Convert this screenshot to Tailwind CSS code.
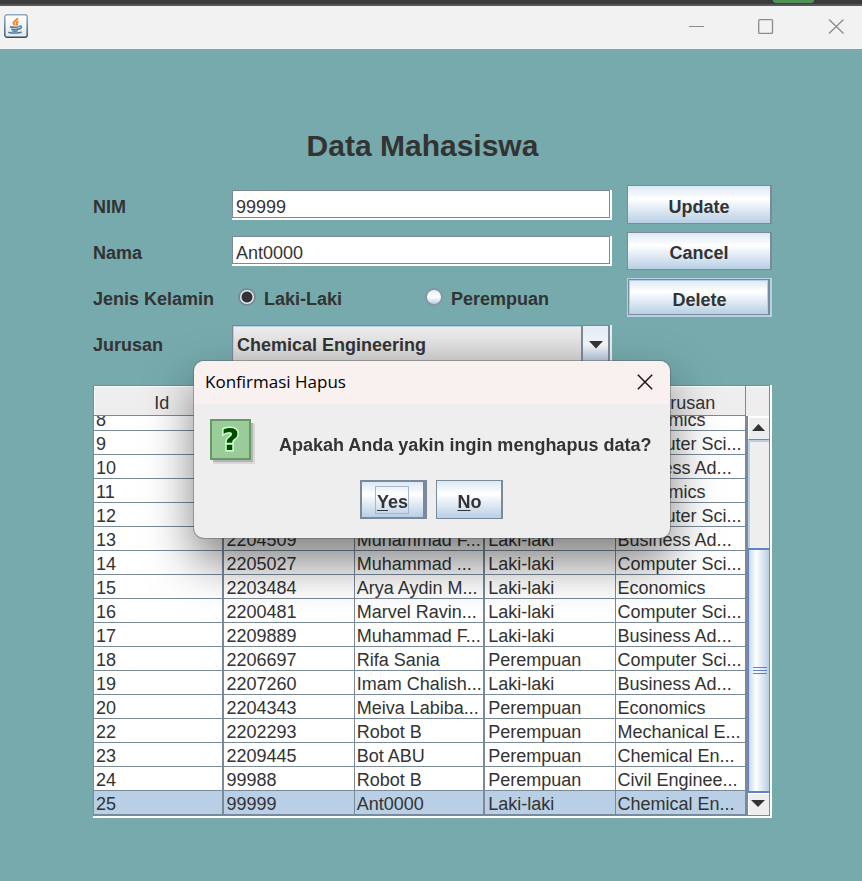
<!DOCTYPE html>
<html lang="id">
<head>
<meta charset="utf-8">
<meta name="viewport" content="width=device-width, initial-scale=1">
<title>Data Mahasiswa</title>
<script src="https://cdn.jsdelivr.net/npm/@tailwindcss/browser@4"></script>
</head>
<body class="relative flex min-h-screen flex-col bg-[#76aaad] font-['Liberation_Sans',Arial,sans-serif] text-[18px] leading-[22px] text-[#333333]">

<!-- Strip of the window behind -->
<div class="flex h-[6px] items-start justify-end border-b-2 border-[#5a575a] bg-[#3a3d3e] pr-[48px]">
  <div class="h-[3px] w-[41px] rounded-b-full bg-[#4f9455]"></div>
</div>

<!-- Window title bar -->
<header class="flex h-[43px] items-start justify-between bg-[#f2f2f2] pt-[8px] pr-[18px] pl-[4px]">
  <svg class="h-6 w-6" viewBox="0 0 24 24" fill="none" aria-hidden="true">
    <defs><linearGradient id="jf" x1="0" y1="0" x2="0" y2="1"><stop offset="0" stop-color="#8fa9bd"/><stop offset="1" stop-color="#2f5068"/></linearGradient>
    <linearGradient id="jb" x1="0" y1="0" x2="0" y2="1"><stop offset="0" stop-color="#fff"/><stop offset="1" stop-color="#e4e6e8"/></linearGradient></defs>
    <rect x=".8" y=".8" width="22.4" height="22.4" rx="2.2" fill="url(#jb)" stroke="url(#jf)" stroke-width="1.4"/>
    <path d="M13.400 4c.5 2.300-4.400 3.200-3.900 5.300.2.800 1.200 1.200 1.500 2.100M14.400 7.400c-1.600.7-2.300 1.500-1.500 2.500.5.600.2 1.200-.4 1.800" stroke="#f08020" stroke-width="1.900"/>
    <path d="M6 12.700c1.800.7 7.400.7 9.400-.1M7.200 14.800c1.500.8 5.600.8 7.600 0M8 16.600c1.500.7 4.200.7 5.800 0M15.400 12c2.700-.7 2.700 2.500-.5 3.200M4.400 18.200c1.500 1.200 11 1.200 13.200-.2" stroke="#4f7b9e" stroke-width="1.500"/>
  </svg>
  <div class="flex gap-[54px] pt-[4px]">
    <button aria-label="Minimize"><svg class="h-4 w-4" viewBox="0 0 16 16" fill="none" stroke="#8c8c8c" stroke-width="1"><path d="M1 8.500h15"/></svg></button>
    <button aria-label="Maximize"><svg class="h-4 w-4" viewBox="0 0 16 16" fill="none" stroke="#8c8c8c" stroke-width="1.300"><rect x=".7" y="1.600" width="13.800" height="13.800" rx="1"/></svg></button>
    <button aria-label="Close"><svg class="h-4 w-4" viewBox="0 0 16 16" fill="none" stroke="#8c8c8c" stroke-width="1.300"><path d="M1 1.500l14.500 14M15.500 1.500L1 15.500"/></svg></button>
  </div>
</header>

<main class="flex flex-col pr-[90px] pl-[93px] pt-[78px] pb-[63px]">
  <h1 class="pr-[20px] text-center text-[30px] leading-[38px] font-bold">Data Mahasiswa</h1>

  <form class="mt-[19px] flex gap-[15px]">
    <div class="grid flex-1 grid-cols-[139px_1fr] auto-rows-[46px] items-center font-bold">
      <label for="nim">NIM</label>
      <div class="mb-1 border-r-2 border-b-2 border-white"><input id="nim" value="99999" class="block h-[28px] w-full border border-[#7a8a99] bg-white pt-[6px] pl-[3px] font-normal outline-none"></div>
      <label for="nama">Nama</label>
      <div class="mb-1 border-r-2 border-b-2 border-white"><input id="nama" value="Ant0000" class="block h-[28px] w-full border border-[#7a8a99] bg-white pt-[6px] pl-[3px] font-normal outline-none"></div>
      <span id="jk">Jenis Kelamin</span>
      <div role="radiogroup" aria-labelledby="jk" class="grid grid-cols-2 pl-[6px]">
        <label class="flex items-start gap-[8px]"><input type="radio" name="jk" checked class="h-[18px] w-[18px] appearance-none rounded-full border-2 border-[#7a8a99] bg-[radial-gradient(circle,#333_0_5px,#e8f0f8_6px)]">Laki-Laki</label>
        <label class="flex items-start gap-[8px]"><input type="radio" name="jk" class="h-[18px] w-[18px] appearance-none rounded-full border-2 border-[#8496a8] bg-linear-to-b from-[#e3ecf5] via-white to-[#b8cfe5]">Perempuan</label>
      </div>
      <label for="jurusan">Jurusan</label>
      <div class="relative border-r-2 border-[#e8edf2]">
        <select id="jurusan" class="block h-[40px] w-full appearance-none border border-[#7a8a99] bg-linear-to-b from-[#eeeeee] to-[#d0d0d0] pl-[4px] font-bold inset-ring inset-ring-[#b8cfe5] outline-none"><option>Chemical Engineering</option></select>
        <span class="pointer-events-none absolute inset-y-0 right-0 flex w-[29px] items-center justify-center border-2 border-t border-[#7a8a99] bg-linear-to-b from-[#e3ecf5] via-[#f4f7fb] to-[#a9bfd5]">
          <svg class="h-[8px] w-[14px]" viewBox="0 0 14 8"><path d="M0 0h14L7 7.500z" fill="#333"/></svg>
        </span>
      </div>
    </div>
    <div class="flex w-[145px] flex-col gap-[8px] pt-px">
      <button type="button" class="h-[39px] border border-r-2 border-[#7a8a99] bg-linear-to-b from-[#dde8f3] via-white via-35% to-[#b8cfe5] pt-1 font-bold">Update</button>
      <button type="button" class="h-[38px] border border-r-2 border-[#7a8a99] bg-linear-to-b from-[#dde8f3] via-white via-35% to-[#b8cfe5] pt-1 font-bold">Cancel</button>
      <div class="flex h-[39px] border border-r-2 border-b-2 border-[#b8cfe5]"><button type="button" class="flex-1 border border-r-2 border-[#7a8a99] bg-linear-to-b from-[#dde8f3] via-white via-35% to-[#b8cfe5] pt-[6px] pl-[2px] font-bold inset-ring inset-ring-[#b8cfe5]">Delete</button></div>
    </div>
  </form>

  <section class="mt-[17px] border-r-2 border-b-2 border-white">
    <div class="flex h-[431px] border border-[#7a8a99]">
      <!-- Reversed column: the list opens scrolled to its last row -->
      <div class="flex flex-1 flex-col-reverse overflow-hidden">
        <table class="w-full shrink-0 table-fixed border-separate border-spacing-0 [&_td]:h-6 [&_td]:border-r [&_td]:border-b [&_td]:border-[#7a8a99] [&_td]:p-0 [&_td]:pt-[3px] [&_td]:pl-[2px] [&_td]:leading-[20px] [&_td]:whitespace-nowrap [&_td:nth-child(1)]:border-r-2 [&_td:nth-child(3)]:border-r-2 [&_td:nth-child(4)]:pl-[3px]">
          <thead><tr class="[&_th]:sticky [&_th]:top-0 [&_th]:h-[30px] [&_th]:border-r [&_th]:border-b [&_th]:border-[#7a8a99] [&_th]:bg-[#eeeeee] [&_th]:p-0 [&_th]:pt-1 [&_th]:pl-[6px] [&_th]:font-normal [&_th]:inset-shadow-[1px_1px_0_#ffffff]"><th>Id</th><th>NIM</th><th>Nama</th><th>Jenis Kelamin</th><th>Jurusan</th></tr></thead>
          <tbody class="bg-white">
            <tr><td>8</td><td></td><td></td><td></td><td>Economics</td></tr>
            <tr><td>9</td><td></td><td></td><td></td><td>Computer Sci...</td></tr>
            <tr><td>10</td><td></td><td></td><td></td><td>Business Ad...</td></tr>
            <tr><td>11</td><td></td><td></td><td></td><td>Economics</td></tr>
            <tr><td>12</td><td></td><td></td><td></td><td>Computer Sci...</td></tr>
            <tr><td>13</td><td>2204509</td><td>Muhammad F...</td><td>Laki-laki</td><td>Business Ad...</td></tr>
            <tr><td>14</td><td>2205027</td><td>Muhammad ...</td><td>Laki-laki</td><td>Computer Sci...</td></tr>
            <tr><td>15</td><td>2203484</td><td>Arya Aydin M...</td><td>Laki-laki</td><td>Economics</td></tr>
            <tr><td>16</td><td>2200481</td><td>Marvel Ravin...</td><td>Laki-laki</td><td>Computer Sci...</td></tr>
            <tr><td>17</td><td>2209889</td><td>Muhammad F...</td><td>Laki-laki</td><td>Business Ad...</td></tr>
            <tr><td>18</td><td>2206697</td><td>Rifa Sania</td><td>Perempuan</td><td>Computer Sci...</td></tr>
            <tr><td>19</td><td>2207260</td><td>Imam Chalish...</td><td>Laki-laki</td><td>Business Ad...</td></tr>
            <tr><td>20</td><td>2204343</td><td>Meiva Labiba...</td><td>Perempuan</td><td>Economics</td></tr>
            <tr><td>22</td><td>2202293</td><td>Robot B</td><td>Perempuan</td><td>Mechanical E...</td></tr>
            <tr><td>23</td><td>2209445</td><td>Bot ABU</td><td>Perempuan</td><td>Chemical En...</td></tr>
            <tr><td>24</td><td>99988</td><td>Robot B</td><td>Perempuan</td><td>Civil Enginee...</td></tr>
            <tr class="bg-[#b8cfe5]"><td>25</td><td>99999</td><td>Ant0000</td><td>Laki-laki</td><td>Chemical En...</td></tr>
          </tbody>
        </table>
      </div>
      <!-- Scroll bar -->
      <div class="flex w-[23px] flex-col bg-[#eeeeee]">
        <div class="h-[30px] border-t border-white"></div>
        <div class="flex flex-1 flex-col border-l-2 border-[#7a8a99]">
          <button aria-label="Scroll up" class="flex h-[24px] items-center justify-center border-t-2 border-b border-l border-t-white border-b-[#7a8a99] border-l-white pr-[2px] pb-[2px]"><svg class="h-[7px] w-[13px]" viewBox="0 0 13 7"><path d="M0 7h13L6.500 0z" fill="#333"/></svg></button>
          <div class="h-[108px] border-t-2 border-l-2 border-[#b8cfe5]"></div>
          <div class="flex flex-1 items-center justify-end border-y-2 border-l border-[#6382bf] bg-linear-to-r from-[#c8d9ea] via-white via-35% to-[#b8cfe5] pr-[2px]">
            <div class="flex w-[14px] flex-col gap-[2px]"><i class="h-px bg-[#6382bf]"></i><i class="h-px bg-[#6382bf]"></i><i class="h-px bg-[#6382bf]"></i></div>
          </div>
          <button aria-label="Scroll down" class="flex h-[22px] items-center justify-center border-t border-l border-white pr-[2px] pb-[2px]"><svg class="h-[7px] w-[14px]" viewBox="0 0 14 7"><path d="M0 0h14L7 7z" fill="#333"/></svg></button>
        </div>
      </div>
    </div>
  </section>
</main>

<!-- Confirmation dialog -->
<div role="dialog" aria-labelledby="dlg-title" class="absolute top-[361px] left-1/2 ml-px w-[476px] -translate-x-1/2 overflow-hidden rounded-[10px] bg-[#eeeeee] shadow-[0_0_0_1px_rgba(90,90,90,0.45),0_24px_48px_rgba(0,0,0,0.5)]">
  <div class="flex h-[43px] items-center justify-between bg-[#f9f0f0] pr-[17px] pb-[2px] pl-[11px] text-black">
    <h2 id="dlg-title" class="font-['Open_Sans','Noto_Sans',sans-serif] text-[17px] leading-[24px]">Konfirmasi Hapus</h2>
    <button aria-label="Close dialog"><svg class="h-4 w-4" viewBox="0 0 16 16" fill="none" stroke="#111" stroke-width="1.400"><path d="M.8.8l14.400 14.400M15.200.8L.8 15.200"/></svg></button>
  </div>
  <div class="flex items-center pt-[15px] pl-[16px]">
    <svg class="h-[46px] w-[46px] shrink-0" viewBox="0 0 46 46" aria-hidden="true">
      <rect x="3" y="4" width="42" height="41" rx="1" fill="#d8d8d8"/><rect x="3" y="4" width="40" height="39" fill="#b4b4b4"/>
      <rect x="1" y="1" width="39" height="39" fill="#99cc99" stroke="#669966" stroke-width="2"/>
      <text x="20.500" y="31" text-anchor="middle" font-family="DejaVu Sans, sans-serif" font-weight="bold" font-size="31" fill="#004d00" stroke="#ccffcc" stroke-width="3" paint-order="stroke">?</text>
    </svg>
    <p class="pt-[6px] pl-[23px] font-bold">Apakah Anda yakin ingin menghapus data?</p>
  </div>
  <div class="flex justify-center gap-[9px] pt-[15px] pr-[2px] pb-[19px]">
    <button class="flex h-[39px] w-[67px] items-center justify-center border-2 border-r-4 border-[#7a8a99] bg-linear-to-b from-[#dde8f3] via-white via-35% to-[#b8cfe5] font-bold"><span class="border border-[#a3b8cc] pt-[4px] pl-px"><u class="underline-offset-2">Y</u>es</span></button>
    <button class="h-[39px] w-[67px] border border-r-2 border-[#7a8a99] bg-linear-to-b from-[#dde8f3] via-white via-35% to-[#b8cfe5] pt-1 pl-[2px] font-bold"><u class="underline-offset-2">N</u>o</button>
  </div>
</div>

</body>
</html>
